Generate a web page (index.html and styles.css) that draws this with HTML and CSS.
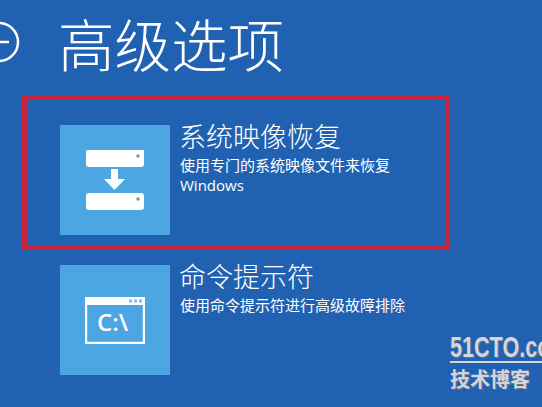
FILE: index.html
```html
<!DOCTYPE html>
<html lang="zh-CN">

<head>
<meta charset="utf-8">
<title>高级选项</title>
<link rel="stylesheet" href="styles.css">
</head>

<body>

<div id="header">
	<svg id="back" width="42" height="42" viewBox="0 0 42 42">
		<circle cx="21" cy="21" r="19" fill="none" stroke="#fff" stroke-width="2.5"/>
		<path d="M10 21H31M10 21L18 13M10 21L18 29" fill="none" stroke="#fff" stroke-width="2.5"/>
	</svg>
	<span id="header-title">高级选项</span>
</div>

<div id="options">
	<div id="highlight"></div>

	<div class="option">
		<div class="tile">
			<svg width="60" height="62" viewBox="0 0 60 62">
				<path d="M3 1H59V15Q59 18 56 18H4Q1 18 1 15V3Q1 1 3 1Z" fill="#fff"/>
				<circle cx="53" cy="7" r="1.8" fill="#7f97a8"/>
				<path d="M26 20H33V30H40L29.5 41L19 30H26Z" fill="#fff"/>
				<path d="M4 44H56Q59 44 59 47V58Q59 61 56 61H4Q1 61 1 58V47Q1 44 4 44Z" fill="#fff"/>
				<circle cx="53" cy="50" r="1.8" fill="#7f97a8"/>
			</svg>
		</div>
		<div class="text">
			<div class="option-title">系统映像恢复</div>
			<div class="option-desc">使用专门的系统映像文件来恢复<br>Windows</div>
		</div>
	</div>

	<div class="option">
		<div class="tile">
			<svg width="60" height="47" viewBox="0 0 60 47">
				<rect x="1" y="1" width="58" height="45" fill="none" stroke="#fff" stroke-width="2.4"/>
				<rect x="1" y="1" width="58" height="7" fill="#fff"/>
				<rect x="44" y="2.5" width="3" height="3" fill="#7fbbe6"/>
				<rect x="49" y="2.5" width="3" height="3" fill="#7fbbe6"/>
				<rect x="54" y="2.5" width="3" height="3" fill="#7fbbe6"/>
				<text x="12" y="34" class="prompt">C:\</text>
			</svg>
		</div>
		<div class="text">
			<div class="option-title">命令提示符</div>
			<div class="option-desc">使用命令提示符进行高级故障排除</div>
		</div>
	</div>
</div>

<div id="watermark">
	<div id="watermark-site"><span id="watermark-name">51CTO.com</span></div>
	<div id="watermark-blog">技术博客</div>
</div>

</body>

</html>
```

FILE: styles.css
```css
html, body {
	margin: 0;
	padding: 0;
}

body {
	position: relative;
	width: 542px;
	height: 407px;
	overflow: hidden;
	background-color: #2161b1;
	color: #fff;
	font-family: "Open Sans", "Noto Sans CJK SC", sans-serif;
}

#header {
	display: flex;
	align-items: center;
	height: 84px;
	padding-left: 58px;
}

#back {
	flex: none;
	margin-left: -80px;
	margin-right: 38px;
}

#header-title {
	font-family: "Noto Sans CJK SC", sans-serif;
	font-size: 56.5px;
	font-weight: 300;
	line-height: 84px;
}

#options {
	position: relative;
	display: flex;
	flex-direction: column;
	gap: 30px;
	padding: 41px 0 0 60px;
}

#highlight {
	position: absolute;
	left: 22px;
	top: 11px;
	width: 418px;
	height: 145px;
	border: 5px solid #c8243a;
}

.option {
	position: relative;
	display: flex;
	gap: 10px;
	height: 110px;
}

.tile {
	display: flex;
	flex: none;
	align-items: center;
	justify-content: center;
	width: 110px;
	height: 110px;
	background-color: #4ba6e2;
}

.text {
	margin-top: -6px;
}

.option-title {
	margin-left: -1px;
	font-family: "Noto Sans CJK SC", sans-serif;
	font-size: 27px;
	font-weight: 300;
	line-height: 34px;
}

.option-desc {
	margin-top: 2px;
	font-size: 15px;
	line-height: 20px;
}

.prompt {
	fill: #fff;
	font-family: "Open Sans", sans-serif;
	font-size: 24px;
	font-weight: 600;
}

#watermark {
	position: absolute;
	left: 450px;
	top: 332px;
	white-space: nowrap;
	color: #d3d6dc;
	font-family: "Liberation Sans", "Noto Sans CJK SC", sans-serif;
	font-weight: bold;
	text-shadow: 1px 1px 0 #6b7280;
}

#watermark-site {
	width: 92px;
	height: 29px;
	border-bottom: 2px solid #d3d6dc;
	font-size: 30px;
	line-height: 29px;
}

#watermark-name {
	display: inline-block;
	transform: scaleX(0.72);
	transform-origin: left;
}

#watermark-blog {
	margin-top: 4px;
	font-family: "Noto Sans CJK SC", sans-serif;
	font-size: 20px;
	line-height: 24px;
}
```
